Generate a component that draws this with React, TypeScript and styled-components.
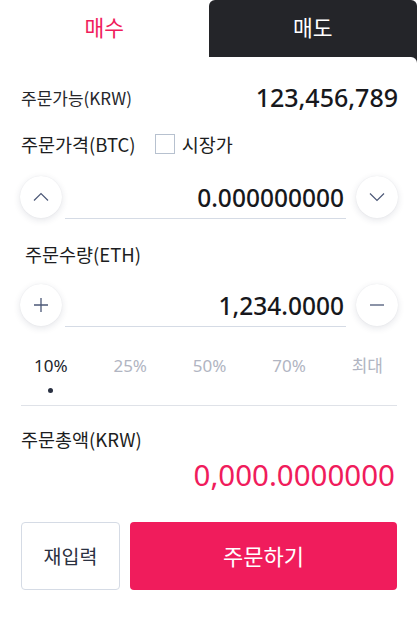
import React from "react";
import styled, { createGlobalStyle } from "styled-components";

const PINK = "#f01c5c";
const DARK = "#242529";
const FONT = `"Noto Sans", "Noto Sans CJK KR", sans-serif`;
const KR = `"Noto Sans CJK KR", sans-serif`;

const Global = createGlobalStyle`
  html, body { margin: 0; padding: 0; background: #fff; }
  body { font-family: ${FONT}; color: #1c1d21; -webkit-font-smoothing: antialiased; }
  * { box-sizing: border-box; }
`;

const Page = styled.div`
  width: 417px;
  min-height: 621px;
  background: linear-gradient(${DARK}, ${DARK}) right 40px / 50% 30px no-repeat;
`;

const TabBar = styled.div`
  display: flex;
  height: 57px;
`;

const Tab = styled.div<{ $active?: boolean }>`
  flex: 1;
  display: flex;
  align-items: center;
  justify-content: center;
  font-size: 21.5px;
  font-family: ${KR};
  background: ${(p) => (p.$active ? "#fff" : DARK)};
  color: ${(p) => (p.$active ? PINK : "#fff")};
  border-radius: ${(p) => (p.$active ? "0" : "6px 6px 0 0")};
  padding-bottom: 4px;
`;

const Content = styled.div`
  background: #fff;
  border-top-right-radius: 6px;
  padding: 23px 20px 0 21px;
  display: flex;
  flex-direction: column;
`;

const InfoRow = styled.div`
  display: flex;
  justify-content: space-between;
  align-items: center;
  height: 34px;
`;

const SmallLabel = styled.span`
  font-family: ${KR};
  font-size: 17px;
  color: #26272b;
`;

const Available = styled.span`
  font-size: 25px;
  font-weight: 500;
  color: #17181c;
  margin-right: -1px;
`;

const Label = styled.div<{ $indent?: number }>`
  display: flex;
  align-items: center;
  height: 30px;
  padding-left: ${(p) => p.$indent ?? 0}px;
  font-family: ${KR};
  font-size: 18.5px;
  color: #1c1d21;
`;

const CheckLabel = styled.label`
  display: flex;
  align-items: center;
  gap: 7px;
  margin-left: 19px;
`;

const CheckBox = styled.span`
  width: 20px;
  height: 20px;
  border: 1.5px solid #b7c1cf;
  background: #fff;
  display: inline-block;
`;

const Stepper = styled.div`
  display: flex;
  align-items: center;
  margin-left: -1px;
  margin-right: -1px;
`;

const Circle = styled.button`
  width: 42px;
  height: 42px;
  border-radius: 50%;
  border: none;
  background: #fff;
  box-shadow: 0 2px 7px rgba(30, 40, 70, 0.12), 0 0 1px rgba(30, 40, 70, 0.1);
  display: flex;
  align-items: center;
  justify-content: center;
  padding: 0;
  flex: none;
`;

const ValueField = styled.div`
  flex: 1;
  display: flex;
  align-items: center;
  justify-content: flex-end;
  border-bottom: 1px solid #d5dbe5;
  font-size: 24.5px;
  font-weight: 500;
  color: #17181c;
  padding-right: 2px;
  margin: 0 10px -2px 3px;
  height: 42px;
`;

const Percents = styled.div`
  display: flex;
  justify-content: space-between;
  padding: 0 14px 0 13px;
  height: 51px;
  border-bottom: 1px solid #dfe2e8;
`;

const Pct = styled.div<{ $active?: boolean }>`
  display: flex;
  flex-direction: column;
  align-items: center;
  gap: 11px;
  font-size: 17px;
  font-family: ${FONT};
  color: ${(p) => (p.$active ? "#22252d" : "#b1b5c2")};
  line-height: 22px;
`;

const Dot = styled.span<{ $on?: boolean }>`
  width: 5px;
  height: 5px;
  border-radius: 50%;
  background: ${(p) => (p.$on ? "#2a3142" : "transparent")};
`;

const Total = styled.div`
  text-align: right;
  font-size: 29.5px;
  color: ${PINK};
  height: 40px;
  line-height: 40px;
  margin-right: 2px;
`;

const Actions = styled.div`
  display: flex;
  gap: 10px;
  height: 68px;
`;

const ResetBtn = styled.button`
  width: 99px;
  border: 1px solid #d5dbe5;
  border-radius: 4px;
  background: #fff;
  font-family: ${KR};
  font-size: 19.5px;
  color: #2b3141;
  padding: 0 0 2px;
`;

const OrderBtn = styled.button`
  flex: 1;
  border: none;
  border-radius: 4px;
  background: ${PINK};
  color: #fff;
  font-family: ${KR};
  font-size: 22px;
  padding: 0 0 2px;
`;

const Spacer = styled.div<{ $h: number }>`
  height: ${(p) => p.$h}px;
  flex: none;
`;

const ICON = "#4c5877";

const Chevron = ({ up }: { up?: boolean }) => (
  <svg width="16" height="10" viewBox="0 0 16 10" fill="none">
    <path
      d={up ? "M1 8.5 L8 1.5 L15 8.5" : "M1 1.5 L8 8.5 L15 1.5"}
      stroke={ICON}
      strokeWidth="1.2"
    />
  </svg>
);

const Plus = () => (
  <svg width="16" height="16" viewBox="0 0 16 16" fill="none">
    <path d="M8 1 V15 M1 8 H15" stroke={ICON} strokeWidth="1.3" />
  </svg>
);

const Minus = () => (
  <svg width="16" height="16" viewBox="0 0 16 16" fill="none">
    <path d="M1 8 H15" stroke={ICON} strokeWidth="1.3" />
  </svg>
);

const pcts = ["10%", "25%", "50%", "70%", "최대"];

export default function App() {
  return (
    <Page>
      <Global />
      <TabBar>
        <Tab $active>매수</Tab>
        <Tab>매도</Tab>
      </TabBar>
      <Content>
        <InfoRow>
          <SmallLabel>주문가능(KRW)</SmallLabel>
          <Available>123,456,789</Available>
        </InfoRow>
        <Spacer $h={15} />
        <Label>
          주문가격(BTC)
          <CheckLabel>
            <CheckBox />
            시장가
          </CheckLabel>
        </Label>
        <Spacer $h={17} />
        <Stepper>
          <Circle aria-label="up">
            <Chevron up />
          </Circle>
          <ValueField>0.000000000</ValueField>
          <Circle aria-label="down">
            <Chevron />
          </Circle>
        </Stepper>
        <Spacer $h={21} />
        <Label $indent={4}>주문수량(ETH)</Label>
        <Spacer $h={15} />
        <Stepper>
          <Circle aria-label="plus">
            <Plus />
          </Circle>
          <ValueField>1,234.0000</ValueField>
          <Circle aria-label="minus">
            <Minus />
          </Circle>
        </Stepper>
        <Spacer $h={29} />
        <Percents>
          {pcts.map((p, i) => (
            <Pct key={p} $active={i === 0}>
              {p}
              <Dot $on={i === 0} />
            </Pct>
          ))}
        </Percents>
        <Spacer $h={18} />
        <Label>주문총액(KRW)</Label>
        <Spacer $h={1} />
        <Total>0,000.0000000</Total>
        <Spacer $h={27} />
        <Actions>
          <ResetBtn>재입력</ResetBtn>
          <OrderBtn>주문하기</OrderBtn>
        </Actions>
      </Content>
    </Page>
  );
}
